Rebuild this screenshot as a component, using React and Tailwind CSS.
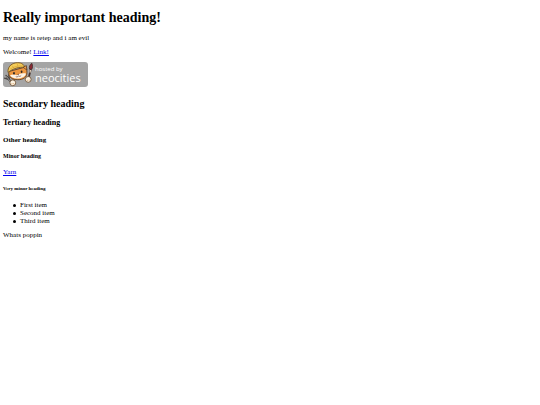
import React from 'react';

const items = ['First item', 'Second item', 'Third item'];

const NeocitiesBadge = () => (
  <svg
    viewBox="0 0 85 25"
    className="block w-[85px] h-[25px]"
    role="img"
    aria-label="Hosted by Neocities"
  >
    <rect width="85" height="25" rx="3" fill="#a5a5a5" />

    {/* fork */}
    <g stroke="#4b4643" strokeWidth="2" strokeLinecap="round" fill="none">
      <path d="M4.400 15l2 3 2 2" />
      <path d="M5.800 12.800l.6 4M1.600 16.200l4.400 1.400M3 13.400l2 2.600" strokeWidth="1.300" />
    </g>
    <path d="M3.400 14.200l2.600 3.600 2 2" stroke="#b5b5b5" strokeWidth="0.700" fill="none" />

    {/* brush */}
    <path d="M27.600 8l-2.200 9" stroke="#463431" strokeWidth="1.800" strokeLinecap="round" />
    <path d="M26.600 7.200c-.8-2.400.4-4.600 2.200-6 1 2.200 1 4.600-.2 6.300z" fill="#8c2934" stroke="#3d2b2a" strokeWidth="0.800" />
    <path d="M27.500 8l-.5 2.600" stroke="#e4d3bc" strokeWidth="1.200" />

    {/* cat */}
    <path
      d="M6.200 9.400c-1.600 4 1.400 7.600 6.600 8.200 5.600.7 10.400-1.400 11-5.400.4-2.400 0-5-.5-7.400l-3 .8z"
      fill="#ec963f"
      stroke="#5c3d24"
      strokeWidth="0.900"
    />
    <path d="M7 13.200c2-.9 4.800-1 6.800 0 2.400-1.600 5.800-2.400 9.200-1.700-.6 3.400-4.800 5.100-9 5-3.600-.1-6.200-1.300-7-3.300z" fill="#fcf3e6" />
    <path
      d="M5 10.400C4.600 5.400 7.600 1.800 12.600.9c5-.8 8.400 1.100 9.200 4.500-6-.6-11.400 1-16.800 5z"
      fill="#f4cd58"
      stroke="#7d571f"
      strokeWidth="0.900"
    />
    <path d="M7.200 7c3.800-2.400 8.200-3.400 12.800-3M9.200 3.800l1.800 2.400M14.200 1.600l.6 2.600" stroke="#cf9a34" strokeWidth="0.600" fill="none" />
    <path d="M20 5.200l3.400-1.600.4 4.400z" fill="#f0a04a" stroke="#4c3625" strokeWidth="0.700" />
    <ellipse cx="11" cy="11.300" rx="0.900" ry="1.200" fill="#2f2724" />
    <ellipse cx="18.600" cy="9.800" rx="0.900" ry="1.200" fill="#2f2724" />
    <path d="M14.100 12.200l1.900-.4-.7 1.300z" fill="#553333" />
    <path d="M12.800 14.600c1 .6 2 .3 2.500-.7.900.7 2 .6 2.900-.4" stroke="#553333" strokeWidth="0.600" fill="none" />

    {/* paws */}
    <circle cx="9.800" cy="20.800" r="2.900" fill="#fcf3e2" stroke="#6b4a2c" strokeWidth="0.800" />
    <circle cx="25.200" cy="17.400" r="2.900" fill="#fcf3e2" stroke="#6b4a2c" strokeWidth="0.800" />
    <path d="M9 22.200v-1M10.600 22.200v-1M24.600 18.800v-1M26.200 18.600v-1" stroke="#d78535" strokeWidth="0.600" />

    <g fill="#ffffff" className="font-['Open_Sans',sans-serif]">
      <text x="32" y="9" fontSize="6">hosted by</text>
      <text x="32" y="20" fontSize="11">neocities</text>
    </g>
  </svg>
);

const App = () => {
  return (
    <main className="px-[3px] pt-2.5 pb-2 bg-white text-black font-['Liberation_Serif',serif] text-[7px] leading-[8px]">
      <h1 className="text-[14px] leading-4 font-bold">Really important heading!</h1>
      <p className="mt-2">my name is retep and i am evil</p>
      <p className="mt-1.5">
        Welcome! <a href="#link" className="text-[#0000ee] underline">Link!</a>
      </p>
      <a href="#neocities" className="block w-fit mt-1.5">
        <NeocitiesBadge />
      </a>
      <h2 className="mt-[11px] text-[10px] leading-3 font-bold">Secondary heading</h2>
      <h3 className="mt-2 text-[8px] leading-[10px] font-bold">Tertiary heading</h3>
      <h4 className="mt-2 font-bold">Other heading</h4>
      <h5 className="mt-2 text-[6px] leading-[8px] font-bold">Minor heading</h5>
      <p className="mt-2">
        <a href="#yarn" className="text-[#0000ee] underline">Yarn</a>
      </p>
      <h6 className="mt-2.5 text-[5px] leading-[6px] font-bold">Very minor heading</h6>
      <ul className="mt-[9px] pl-[10px]">
        {items.map((item) => (
          <li key={item} className="flex items-center gap-1">
            <span className="w-[3px] h-[3px] rounded-full bg-black" />
            {item}
          </li>
        ))}
      </ul>
      <p className="mt-1.5">Whats poppin</p>
    </main>
  );
};

export default App;
